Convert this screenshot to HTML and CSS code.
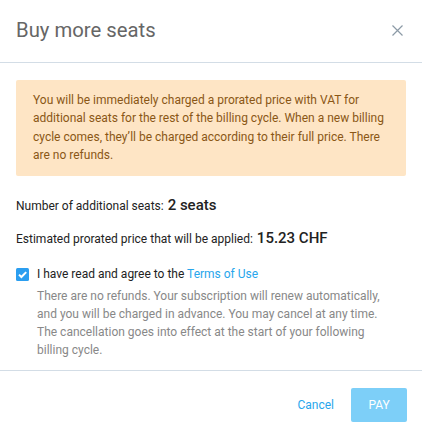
FILE: index.html
```html
<!DOCTYPE html>
<html>
<head>
<meta charset="utf-8">
<link rel="stylesheet" href="styles.css">
</head>
<body>
<div class="modal">
  <div class="modal-header">
    <h1 class="title">Buy more seats</h1>
    <button class="close" aria-label="Close">
      <svg width="11" height="11" viewBox="0 0 11 11"><path d="M0.5 0.5L10.5 10.5M10.5 0.5L0.5 10.5" stroke="#8c9aa6" stroke-width="1.2" fill="none"/></svg>
    </button>
  </div>
  <div class="modal-body">
    <div class="alert">You will be immediately charged a prorated price with VAT for additional seats for the rest of the billing cycle. When a new billing cycle comes, they’ll be charged according to their full price. There are no refunds.</div>
    <div class="row row-first">Number of additional seats: <span class="value">2 seats</span></div>
    <div class="row row-second">Estimated prorated price that will be applied: <span class="value">15.23 CHF</span></div>
    <label class="agree">
      <span class="checkbox">
        <svg width="13" height="13" viewBox="0 0 13 13"><rect width="13" height="13" rx="1.5" fill="#2b9ef0"/><path d="M3 6.6L5.4 9L10.2 4.1" stroke="#fff" stroke-width="2" fill="none"/></svg>
      </span>
      <span class="agree-text">I have read and agree to the <a class="link" href="#">Terms of Use</a></span>
    </label>
    <p class="note">There are no refunds. Your subscription will renew automatically, and you will be charged in advance. You may cancel at any time. The cancellation goes into effect at the start of your following billing cycle.</p>
  </div>
  <div class="modal-footer">
    <button class="btn-cancel">Cancel</button>
    <button class="btn-pay">PAY</button>
  </div>
</div>
</body>
</html>
```
FILE: styles.css
```css
* { box-sizing: border-box; }
html, body { margin: 0; padding: 0; background: #fff; }
body { font-family: Roboto, "Noto Sans", sans-serif; color: #222; }
.modal { width: 422px; }
.modal-header {
  height: 63px;
  border-bottom: 1px solid #d3dde6;
  display: flex;
  align-items: center;
  justify-content: space-between;
  padding: 0 19px 0 16px;
}
.title { margin: 0; font-size: 20.3px; font-weight: 400; color: #666; line-height: 24px; position: relative; top: -1px; }
.close { border: 0; background: none; padding: 0; width: 11px; height: 11px; display: flex; cursor: pointer; position: relative; top: -1px; }
.modal-body { padding: 17px 16px 11px; }
.alert {
  background: #fee5c5;
  color: #8a5716;
  font-size: 12px;
  line-height: 18.3px;
  padding: 11px 16px 12px 17px;
  border-radius: 2px;
}
.row { font-size: 12px; line-height: 20px; color: #222; }
.row-first { margin-top: 19px; }
.row-second { margin-top: 12px; }
.value { font-size: 15px; font-weight: 500; margin-left: 1px; }
.agree { display: flex; align-items: center; margin-top: 15px; font-size: 12px; line-height: 20px; color: #222; }
.checkbox { width: 13px; height: 13px; display: flex; margin-right: 8px; }
.link { color: #28a6ec; text-decoration: none; }
.note { margin: 3px 0 0 21px; font-size: 12px; line-height: 18px; color: #888; padding-right: 8px; }
.modal-footer {
  border-top: 1px solid #d3dde6;
  display: flex;
  justify-content: flex-end;
  align-items: center;
  padding: 17px 15px 17px 16px;
  gap: 17px;
}
.btn-cancel { border: 0; background: none; padding: 0; font-family: inherit; font-size: 12px; color: #28a6ec; cursor: pointer; }
.btn-pay {
  border: 0;
  background: #7dcff8;
  color: #fff;
  width: 56px;
  height: 34px;
  border-radius: 2px;
  font-family: inherit;
  font-size: 12px;
  cursor: pointer;
}
```
